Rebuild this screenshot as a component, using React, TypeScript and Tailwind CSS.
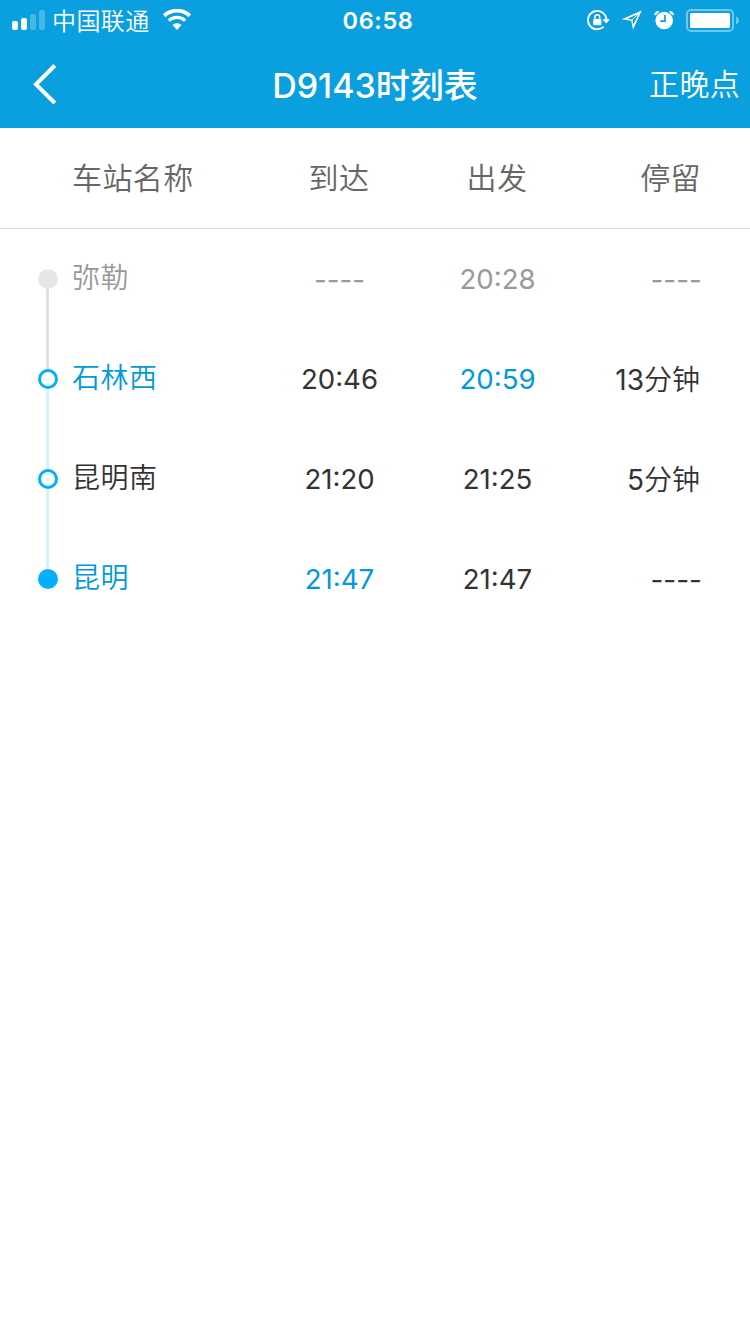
import React from "react";

type Tone = "dark" | "blue" | "gray";
type Marker = "past" | "open" | "end";

interface Stop {
  name: string;
  nameTone: Tone;
  arrive: string;
  arriveTone: Tone;
  depart: string;
  departTone: Tone;
  stay: string;
  unit?: string;
  stayTone: Tone;
  marker: Marker;
  track?: "gray" | "blue";
}

const tones: Record<Tone, string> = {
  dark: "text-[#333333]",
  blue: "text-[#0099dd]",
  gray: "text-[#999999]",
};

const markers: Record<Marker, string> = {
  past: "bg-[#e5e5e5]",
  open: "border-3 border-[#00b0ff] bg-white",
  end: "bg-[#00b0ff]",
};

const stops: Stop[] = [
  { name: "弥勒", nameTone: "gray", arrive: "----", arriveTone: "gray", depart: "20:28", departTone: "gray", stay: "----", stayTone: "gray", marker: "past", track: "gray" },
  { name: "石林西", nameTone: "blue", arrive: "20:46", arriveTone: "dark", depart: "20:59", departTone: "blue", stay: "13", unit: "分钟", stayTone: "dark", marker: "open", track: "blue" },
  { name: "昆明南", nameTone: "dark", arrive: "21:20", arriveTone: "dark", depart: "21:25", departTone: "dark", stay: "5", unit: "分钟", stayTone: "dark", marker: "open", track: "blue" },
  { name: "昆明", nameTone: "blue", arrive: "21:47", arriveTone: "blue", depart: "21:47", departTone: "dark", stay: "----", stayTone: "dark", marker: "end" },
];

const cjk = "font-['Noto_Sans_CJK_SC',sans-serif]";

function StatusBar() {
  return (
    <div className="flex h-10 items-center justify-between pr-[11px] pl-3">
      <div className="flex w-[250px] items-center">
        <div className="flex h-5 items-end gap-[3px]">
          <span className="h-[9px] w-1.5 rounded-[2px] bg-white" />
          <span className="h-3 w-1.5 rounded-[2px] bg-white" />
          <span className="h-4 w-1.5 rounded-[2px] bg-white/25" />
          <span className="h-5 w-1.5 rounded-[2px] bg-white/25" />
        </div>
        <span className={`ml-[7px] text-[24px] leading-[38px] font-[350] tracking-[0.4px] ${cjk}`}>中国联通</span>
        <svg className="ml-[13px]" width="28" height="22" viewBox="0 0 28 22" fill="none">
          <path d="M1.2 6.8C8.5-.1 19.5-.1 26.8 6.8" stroke="white" strokeWidth="3.8" />
          <path d="M5.8 11.6C10.5 7.2 17.5 7.2 22.2 11.6" stroke="white" strokeWidth="3.2" />
          <path d="M9.5 16.1C12.2 13.6 15.8 13.6 18.5 16.1L14 21Z" fill="white" />
        </svg>
      </div>
      <span className="pt-0.5 pl-[5px] font-['Inter',sans-serif] text-[23.5px] leading-10 font-semibold tracking-[0.6px]">06:58</span>
      <div className="flex w-[250px] items-center justify-end">
        <svg width="24" height="24" viewBox="0 0 24 24" fill="none">
          <path d="M20.4 12A9.2 9.2 0 1 0 17.7 18.6" stroke="white" strokeWidth="1.9" />
          <path d="M16.4 11.2H24L20.2 15.4Z" fill="white" />
          <path d="M8.9 12V9.2A2.4 2.4 0 0 1 13.7 9.2V12" stroke="white" strokeWidth="1.5" />
          <rect x="7.2" y="11" width="8.2" height="6.2" rx="1" fill="white" />
        </svg>
        <svg className="ml-[11px]" width="22" height="22" viewBox="0 0 22 22" fill="none">
          <path fillRule="evenodd" d="M20.7 1.5L.8 10.3L10.3 11.7L12 20.8ZM17.5 4.8L12.3 15.8L11.5 10.7L6.5 9.7Z" fill="white" />
          <path d="M19 3L11 11" stroke="white" strokeWidth="1" />
        </svg>
        <svg className="ml-[11px]" width="20" height="20" viewBox="0 0 20 20" fill="none">
          <circle cx="10.2" cy="10.5" r="8.8" fill="white" />
          <path d="M.3 5Q.5 1 4.8 1L5 2L1.5 5.2ZM20 5Q19.8 1 15.5 1L15.3 2L18.8 5.2Z" fill="white" />
          <path d="M11 5V11.2H6.2" stroke="#0a9fdf" strokeWidth="1.7" />
        </svg>
        <svg className="ml-3" width="53" height="24" viewBox="0 0 53 24" fill="none">
          <rect x="1" y="2" width="46" height="21" rx="4" stroke="white" strokeOpacity=".42" strokeWidth="2" />
          <rect x="4" y="5" width="40" height="15" rx="1.5" fill="white" />
          <path d="M50 8.2Q53 9.7 53 12.5Q53 15.2 50 16.7Z" fill="white" fillOpacity=".42" />
        </svg>
      </div>
    </div>
  );
}

function NavBar() {
  return (
    <div className="grid h-[88px] grid-cols-[200px_1fr_200px] items-center">
      <svg className="ml-8" width="26" height="42" viewBox="0 0 26 42" fill="none">
        <path d="M22.8 2.5L4 21.3L22.8 40" stroke="white" strokeWidth="4" />
      </svg>
      <h1 className="pt-0.5 text-center text-[34px] leading-[50px] whitespace-nowrap">
        <span className="font-['Inter',sans-serif] font-[450]">D9143</span>
        <span className={`font-medium ${cjk}`}>时刻表</span>
      </h1>
      <button className={`pr-2.5 pb-1 text-right text-[30px] leading-[44px] font-[350] tracking-[0.3px] ${cjk}`}>正晚点</button>
    </div>
  );
}

function StopRow({ stop }: { stop: Stop }) {
  return (
    <li className="grid h-[100px] grid-cols-[34px_188px_158px_158px_124px] items-center pl-[38px] font-['Inter',sans-serif] text-[28px]">
      <div className="flex h-5 flex-col items-start">
        <span className={`h-5 w-5 shrink-0 rounded-full ${markers[stop.marker]}`} />
        {stop.track && (
          <span className={`ml-2 h-20 w-[3px] shrink-0 ${stop.track === "gray" ? "bg-[#dfdfdf]" : "bg-[#d9f1fb]"}`} />
        )}
      </div>
      <span className={`pb-[7px] font-[350] tracking-[0.5px] ${cjk} ${tones[stop.nameTone]}`}>{stop.name}</span>
      <span className={`pl-px text-center text-[27.6px] font-[370] ${stop.arrive === "----" ? "pt-1" : "pt-0.5"} ${tones[stop.arriveTone]}`}>{stop.arrive}</span>
      <span className={`pt-0.5 pl-px text-center text-[27.6px] font-[370] ${tones[stop.departTone]}`}>{stop.depart}</span>
      <span className={`text-right font-[370] ${stop.unit ? "" : "-mr-0.5 pt-0.5"} ${tones[stop.stayTone]}`}>
        {stop.stay}
        {stop.unit && <span className={`font-[350] ${cjk}`}>{stop.unit}</span>}
      </span>
    </li>
  );
}

export default function App() {
  return (
    <div className="min-h-[1334px] w-[750px] bg-white">
      <header className="h-32 bg-[#0a9fdf] text-white">
        <StatusBar />
        <NavBar />
      </header>
      <div className={`grid h-[101px] grid-cols-[188px_158px_158px_125px] items-center border-b border-[#dddddd] pb-1 pl-[72px] text-[30px] font-[350] tracking-[0.4px] text-[#666666] ${cjk}`}>
        <span>车站名称</span>
        <span className="text-center">到达</span>
        <span className="text-center">出发</span>
        <span className="text-right">停留</span>
      </div>
      <ul>
        {stops.map((stop) => (
          <StopRow key={stop.name} stop={stop} />
        ))}
      </ul>
    </div>
  );
}
